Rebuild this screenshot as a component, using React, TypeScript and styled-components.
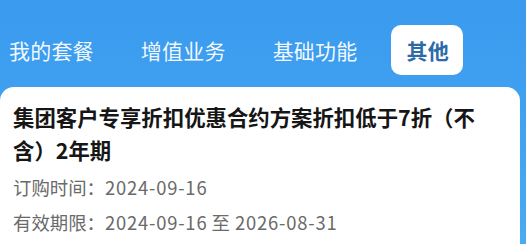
import React from 'react';
import styled, { createGlobalStyle } from 'styled-components';

const GlobalStyle = createGlobalStyle`
  html, body {
    margin: 0;
    padding: 0;
  }
  body {
    width: 526px;
    height: 244px;
    overflow: hidden;
    font-family: "Noto Sans CJK SC", "Noto Sans", sans-serif;
  }
`;

const Page = styled.div`
  width: 526px;
  height: 244px;
  background: linear-gradient(180deg, #3a9bef 0%, #42a3f1 60%, #4aabf2 100%);
  display: flex;
  flex-direction: column;
  overflow: hidden;
`;

const Tabs = styled.div`
  display: flex;
  align-items: center;
  height: 87px;
  padding: 12px 0 0 9px;
  box-sizing: border-box;
`;

const Tab = styled.div<{ active?: boolean }>`
  font-size: 21px;
  line-height: 50px;
  height: 50px;
  color: ${(p) => (p.active ? '#2c6aa8' : 'rgba(255, 255, 255, 0.95)')};
  font-weight: ${(p) => (p.active ? 700 : 400)};
  background: ${(p) => (p.active ? '#ffffff' : 'transparent')};
  border-radius: 10px;
  padding: ${(p) => (p.active ? '0 14px 0 15px' : '0')};
  margin-right: ${(p) => (p.active ? '0' : '47px')};
  margin-left: ${(p) => (p.active ? '-13px' : '0')};
  letter-spacing: 0.2px;
`;

const Card = styled.div`
  flex: 1;
  width: 520px;
  background: #ffffff;
  border-radius: 14px 14px 0 0;
  padding: 13px 30px 0 13px;
  box-sizing: border-box;
`;

const Title = styled.div`
  font-size: 21.4px;
  font-weight: 700;
  line-height: 33px;
  color: #161616;
  margin-bottom: 4px;
`;

const InfoRow = styled.div`
  font-size: 18.4px;
  line-height: 35px;
  color: #6a6a6a;
`;

const Num = styled.span`
  letter-spacing: 0.8px;
`;

const Sep = styled.span`
  margin: 0 1px 0 0;
`;

export default function App() {
  return (
    <>
      <GlobalStyle />
      <Page>
        <Tabs>
          <Tab>我的套餐</Tab>
          <Tab>增值业务</Tab>
          <Tab>基础功能</Tab>
          <Tab active>其他</Tab>
        </Tabs>
        <Card>
          <Title>集团客户专享折扣优惠合约方案折扣低于7折（不含）2年期</Title>
          <InfoRow>
            订购时间：<Num>2024-09-16</Num>
          </InfoRow>
          <InfoRow>
            有效期限：<Num>2024-09-16</Num> <Sep>至</Sep> <Num>2026-08-31</Num>
          </InfoRow>
        </Card>
      </Page>
    </>
  );
}
